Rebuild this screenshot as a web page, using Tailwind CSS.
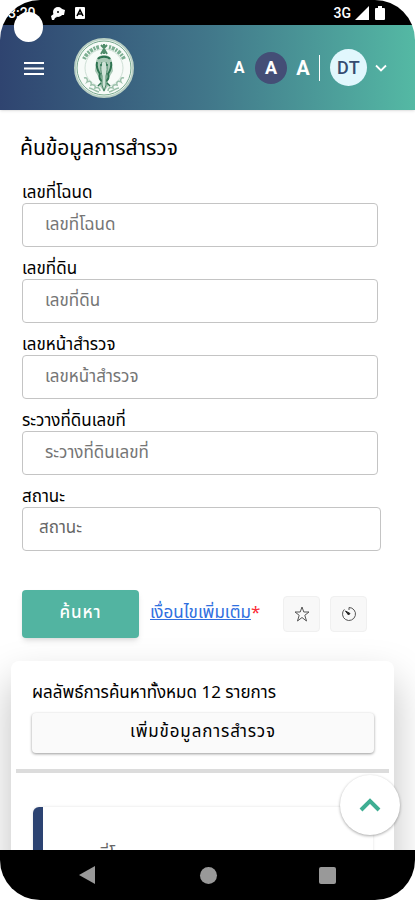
<!DOCTYPE html>
<html lang="th">

<head>
    <meta charset="UTF-8">
    <meta name="viewport" content="width=device-width, initial-scale=1.0">
    <title>ค้นข้อมูลการสำรวจ</title>
    <script src="https://cdn.jsdelivr.net/npm/@tailwindcss/browser@4"></script>
</head>

<body class="bg-white font-['Noto_Sans_Thai','Noto_Sans',sans-serif] text-black">

    <div class="relative flex flex-col h-screen overflow-hidden bg-white rounded-[40px]">

        <!-- status bar -->
        <div class="flex items-center justify-between h-[25px] shrink-0 pl-2 pr-7 text-white bg-black font-[Roboto,sans-serif]">
            <div class="flex items-center">
                <span class="w-[42px] text-sm font-medium">3:20</span>
                <svg class="w-4 h-4" viewBox="0 0 16 16" fill="white">
                    <circle cx="8" cy="7" r="5" />
                    <path d="M1 11l4-3 2 4-2 1-1 2H2zM12 4l3 1-1 5h-3z" />
                    <circle cx="8" cy="7" r="1" fill="black" />
                </svg>
                <svg class="w-3 h-3 ml-2" viewBox="0 0 12 12">
                    <rect x="1" width="10" height="12" rx="1" fill="white" />
                    <path d="M3 9L6 3L9 9M4 7h4" fill="none" stroke="black" stroke-width="1.6" />
                </svg>
            </div>
            <div class="flex items-center gap-1">
                <span class="text-sm font-medium">3G</span>
                <svg class="w-[14px] h-[14px]" viewBox="0 0 14 14" fill="white">
                    <path d="M14 0V14H0z" />
                </svg>
                <svg class="w-[14px] h-[14px]" viewBox="0 0 14 14" fill="white">
                    <path d="M5 0h4v2h2a1 1 0 0 1 1 1v10a1 1 0 0 1-1 1H3a1 1 0 0 1-1-1V3a1 1 0 0 1 1-1h2z" />
                </svg>
            </div>
        </div>
        <div class="absolute z-10 bg-white rounded-full top-3 left-[14px] w-[29px] h-[30px]"></div>

        <!-- header -->
        <header class="flex items-center justify-between h-[85px] shrink-0 pl-6 pr-7 shadow-sm bg-linear-to-r from-[#2f4470] via-[#41778a] via-50% to-[#54b9a4]">
            <div class="flex items-center gap-7">
                <button type="button" aria-label="เมนู" class="w-5 h-5">
                    <svg viewBox="0 0 20 20" stroke="white" stroke-width="2">
                        <path d="M0 5h20M0 10.500h20M0 16h20" />
                    </svg>
                </button>
                <svg class="w-16 h-16" viewBox="0 0 64 64" fill="none">
                    <circle cx="32" cy="32" r="29" fill="#f7fbf8" stroke="#b9d0c4" stroke-width="2" />
                    <circle cx="32" cy="32" r="27" stroke="#76a88c" stroke-width="1" />
                    <circle cx="32" cy="32" r="19" stroke="#cfe0d6" stroke-width="1" />
                    <!-- lettering band -->
                    <path d="M12 23A22 22 0 0 1 27 11M37 11A22 22 0 0 1 52 23" stroke="#7daf92" stroke-width="4" stroke-dasharray="2 1 3 1" />
                    <path d="M29 9l3 3 3-3M32 8v10M29 18l3-5 3 5" stroke="#4f8c6a" stroke-width="2" />
                    <!-- elephant head and trunk -->
                    <path d="M24 27c0-6 4-8 8-8s8 2 8 8l1 8-3 5-2 4v6l-4 6-4-6v-6l-2-4-3-5z" fill="#a9c9b6" />
                    <path d="M26 23c2-3 10-3 12 0M25 26c-1 5 1 9 3 12M39 26c1 5-1 9-3 12M28 37c-1 4 0 7 2 8M36 37c1 4 0 7-2 8" stroke="#2d7350" stroke-width="2" />
                    <path d="M30 26c-2 5-1 10 0 14v9l2 6 2-6v-9c1-4 2-9 0-14" fill="#cfe3d7" stroke="#4a8767" />
                    <path d="M28 29h2M34 29h2M29 47l-3 3M35 47l3 3" stroke="#2d7350" stroke-width="1.500" />
                    <!-- clouds -->
                    <path d="M12 42c3-1 4 2 3 4 3-2 5 0 4 3 3-1 5 1 4 3 3-1 5 0 5 3M52 42c-3-1-4 2-3 4-3-2-5 0-4 3-3-1-5 1-4 3-3-1-5 0-5 3M17 52c3 0 6 3 10 4M47 52c-3 0-6 3-10 4" stroke="#9bc0aa" stroke-width="1.500" />
                </svg>
            </div>
            <div class="flex items-center font-bold text-white font-[Roboto,sans-serif]">
                <button type="button" class="w-4 mr-2 text-base">A</button>
                <button type="button" class="w-8 h-8 rounded-full text-lg bg-[#444e76]">A</button>
                <button type="button" class="w-5 mx-1.5 text-xl">A</button>
                <span class="h-[26px] border-l border-white"></span>
                <button type="button" class="flex items-center ml-2.5">
                    <span class="flex items-center justify-center w-[37px] h-[37px] text-lg font-medium tracking-wide rounded-full bg-[#e1f7fd] text-[#354b70]">DT</span>
                    <svg class="w-3 h-3 ml-2" viewBox="0 0 12 12" fill="none" stroke="white" stroke-width="1.800">
                        <path d="M1 3.500L6 8.500L11 3.500" />
                    </svg>
                </button>
            </div>
        </header>

        <main class="flex-1 min-h-0 overflow-hidden text-[17px]">
            <form class="pt-[25px] pl-[22px]" onsubmit="return false">
                <h1 class="-ml-0.5 mb-4 text-[21px] leading-7">ค้นข้อมูลการสำรวจ</h1>

                <div class="flex flex-col gap-2 pr-[37px]">
                    <div>
                        <label for="deed" class="block pt-1 leading-5">เลขที่โฉนด</label>
                        <input id="deed" type="text" placeholder="เลขที่โฉนด"
                            class="block w-full h-11 px-[22px] border border-[#c4c4c4] rounded placeholder:text-[#757575]">
                    </div>
                    <div>
                        <label for="land" class="block pt-1 leading-5">เลขที่ดิน</label>
                        <input id="land" type="text" placeholder="เลขที่ดิน"
                            class="block w-full h-11 px-[22px] border border-[#c4c4c4] rounded placeholder:text-[#757575]">
                    </div>
                    <div>
                        <label for="survey" class="block pt-1 leading-5">เลขหน้าสำรวจ</label>
                        <input id="survey" type="text" placeholder="เลขหน้าสำรวจ"
                            class="block w-full h-11 px-[22px] border border-[#c4c4c4] rounded placeholder:text-[#757575]">
                    </div>
                    <div>
                        <label for="sheet" class="block pt-1 leading-5">ระวางที่ดินเลขที่</label>
                        <input id="sheet" type="text" placeholder="ระวางที่ดินเลขที่"
                            class="block w-full h-11 px-[22px] border border-[#c4c4c4] rounded placeholder:text-[#757575]">
                    </div>
                </div>
                <div class="mt-2 pr-[34px]">
                    <label for="status" class="block pt-1 leading-5">สถานะ</label>
                    <select id="status" class="block w-full h-11 px-4 border border-[#c4c4c4] rounded appearance-none text-[#666666]">
                        <option>สถานะ</option>
                    </select>
                </div>

                <div class="flex items-center pt-[39px]">
                    <button type="submit" class="h-12 w-[117px] font-medium tracking-wider text-white rounded bg-[#52b4a1] shadow-md">ค้นหา</button>
                    <a href="#" class="ml-[11px] text-[#2f6fe0] underline">เงื่อนไขเพิ่มเติม</a><span class="text-red-500">*</span>
                    <div class="flex gap-2.5 ml-auto pr-12">
                        <button type="button" aria-label="รายการโปรด" class="flex items-center justify-center w-[37px] h-9 rounded border border-[#f0f0f0] bg-[#f8f8f8]">
                            <svg class="w-4 h-4" viewBox="0 0 16 16" fill="none" stroke="#555">
                                <path d="M8 1l1.800 5H15l-4.200 3.300L12.500 15 8 11.500 3.500 15l1.700-5.700L1 6h5.200z" />
                            </svg>
                        </button>
                        <button type="button" aria-label="ประวัติ" class="flex items-center justify-center w-[37px] h-9 rounded border border-[#f0f0f0] bg-[#f8f8f8]">
                            <svg class="w-4 h-4" viewBox="0 0 16 16" fill="none" stroke="#555">
                                <path d="M8 4V1.500A6.500 6.500 0 1 1 3.400 3.400" />
                                <path d="M4.500 5L9 7.500 7.500 9z" fill="#222" stroke="#222" />
                            </svg>
                        </button>
                    </div>
                </div>
            </form>

            <section class="mt-[23px] ml-[11px] mr-[21px] h-80 pt-[18px] rounded-lg bg-white shadow-[0_20px_40px_rgba(0,0,0,0.25)]">
                <div class="pl-[21px] pr-5">
                    <p class="leading-7">ผลลัพธ์การค้นหาทั้งหมด 12 รายการ</p>
                    <button type="button" class="w-full h-10 mt-1.5 tracking-wider rounded bg-[#fafafa] shadow-[0_1px_3px_rgba(0,0,0,0.4)]">เพิ่มข้อมูลการสำรวจ</button>
                </div>
                <hr class="mt-4 mx-[5px] border-t-4 border-[#dcdcdc]">
                <div class="mt-[34px] ml-[22px] mr-[21px] h-40 pt-9 pl-8 border-l-[10px] border-[#2c4372] rounded-l-md shadow-[0_0_3px_rgba(0,0,0,0.12)]">
                    <p class="text-[#666666]">เลขที่โฉนด</p>
                </div>
            </section>
        </main>

        <button type="button" aria-label="กลับขึ้นด้านบน"
            class="absolute right-[15px] bottom-[65px] flex items-center justify-center w-[60px] h-[60px] bg-white rounded-full shadow-[0_1px_3px_rgba(0,0,0,0.35)]">
            <svg class="w-6 h-6" viewBox="0 0 24 24" fill="none" stroke="#3fae93" stroke-width="4">
                <path d="M3 17l9-9 9 9" />
            </svg>
        </button>

        <!-- navigation bar -->
        <div class="relative flex items-center justify-between h-[50px] shrink-0 px-[79px] bg-black">
            <svg class="w-[18px] h-[18px]" viewBox="0 0 18 18" fill="#999">
                <path d="M0 9L16 0v18z" />
            </svg>
            <span class="rounded-full w-[17px] h-[17px] bg-[#999]"></span>
            <span class="rounded-xs w-[17px] h-[17px] bg-[#999]"></span>
        </div>
    </div>

</body>

</html>
